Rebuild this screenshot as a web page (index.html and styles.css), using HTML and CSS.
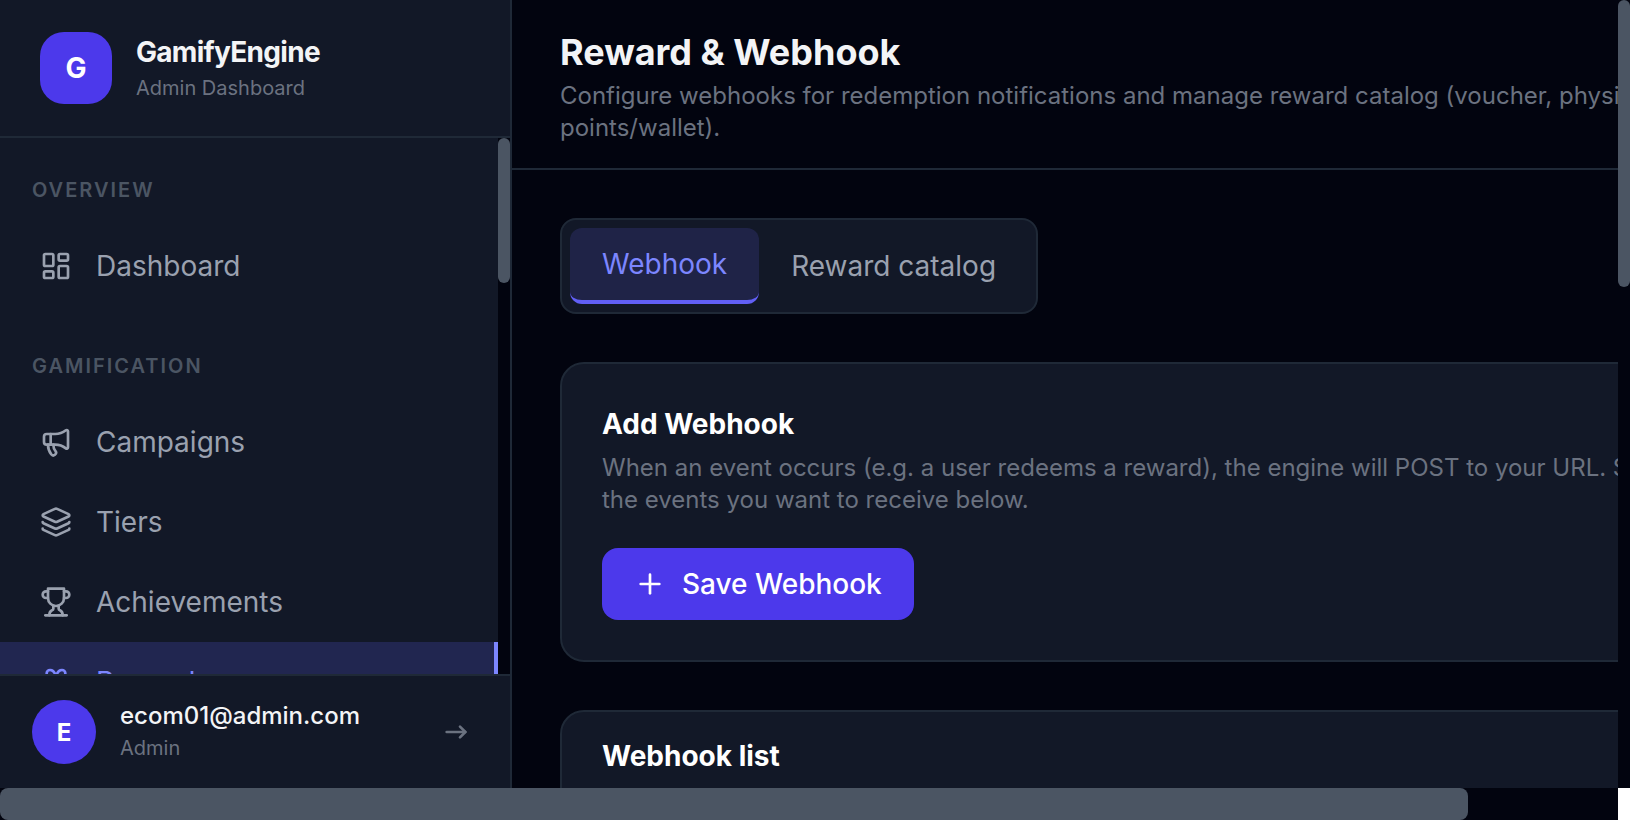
FILE: index.html
```html
<!DOCTYPE html>
<html lang="en">
<head>
<meta charset="utf-8">
<meta name="viewport" content="width=device-width, initial-scale=1">
<title>GamifyEngine - Reward &amp; Webhook</title>
<link rel="stylesheet" href="styles.css">
</head>
<body>
<div class="window">
  <div class="viewport">
    <div class="app">
      <aside class="sidebar">
        <div class="brand">
          <div class="brand-logo">G</div>
          <div class="brand-text">
            <div class="brand-name">GamifyEngine</div>
            <div class="brand-sub">Admin Dashboard</div>
          </div>
        </div>
        <div class="nav-wrap">
          <nav class="nav">
            <section class="nav-section">
              <h2 class="nav-label">OVERVIEW</h2>
              <a class="nav-item" href="#dashboard">
                <svg class="icon" viewBox="0 0 24 24"><rect x="3" y="3" width="7" height="9" rx="1"/><rect x="14" y="3" width="7" height="5" rx="1"/><rect x="14" y="12" width="7" height="9" rx="1"/><rect x="3" y="16" width="7" height="5" rx="1"/></svg>
                Dashboard
              </a>
            </section>
            <section class="nav-section">
              <h2 class="nav-label">GAMIFICATION</h2>
              <a class="nav-item" href="#campaigns">
                <svg class="icon" viewBox="0 0 24 24"><path d="M11 6a13 13 0 0 0 8.4-2.8A1 1 0 0 1 21 4v12a1 1 0 0 1-1.6.8A13 13 0 0 0 11 14H5a2 2 0 0 1-2-2V8a2 2 0 0 1 2-2z"/><path d="M6 14a12 12 0 0 0 2.4 7.2 2 2 0 0 0 3.2-2.4A8 8 0 0 1 10 14"/><path d="M8 6v8"/></svg>
                Campaigns
              </a>
              <a class="nav-item" href="#tiers">
                <svg class="icon" viewBox="0 0 24 24"><path d="M12.83 2.18a2 2 0 0 0-1.66 0L2.6 6.08a1 1 0 0 0 0 1.83l8.58 3.91a2 2 0 0 0 1.66 0l8.58-3.9a1 1 0 0 0 0-1.83z"/><path d="M2 12a1 1 0 0 0 .58.91l8.6 3.91a2 2 0 0 0 1.65 0l8.58-3.9A1 1 0 0 0 22 12"/><path d="M2 17a1 1 0 0 0 .58.91l8.6 3.91a2 2 0 0 0 1.65 0l8.58-3.9A1 1 0 0 0 22 17"/></svg>
                Tiers
              </a>
              <a class="nav-item" href="#achievements">
                <svg class="icon" viewBox="0 0 24 24"><path d="M6 9H4.5a2.5 2.5 0 0 1 0-5H6"/><path d="M18 9h1.500a2.500 2.500 0 0 0 0-5H18"/><path d="M4 22h16"/><path d="M10 14.660V17c0 .55-.47.98-.97 1.210C7.850 18.750 7 20.240 7 22"/><path d="M14 14.660V17c0 .55.47.98.97 1.210C16.150 18.750 17 20.240 17 22"/><path d="M18 2H6v7a6 6 0 0 0 12 0V2Z"/></svg>
                Achievements
              </a>
              <a class="nav-item nav-item-active" href="#rewards">
                <svg class="icon" viewBox="0 0 24 24"><rect x="3" y="8" width="18" height="4" rx="1"/><path d="M12 8v13"/><path d="M19 12v7a2 2 0 0 1-2 2H7a2 2 0 0 1-2-2v-7"/><path d="M7.500 8a2.500 2.500 0 0 1 0-5A4.800 8 0 0 1 12 8a4.800 8 0 0 1 4.500-5 2.500 2.500 0 0 1 0 5"/></svg>
                Rewards
              </a>
            </section>
          </nav>
          <div class="scroll-track"><div class="scroll-thumb scroll-thumb-nav"></div></div>
        </div>
        <div class="user">
          <div class="avatar">E</div>
          <div class="user-text">
            <div class="user-email">ecom01@admin.com</div>
            <div class="user-role">Admin</div>
          </div>
          <button class="logout" type="button" aria-label="Log out">
            <svg class="icon" viewBox="0 0 24 24"><path d="M5 12h14"/><path d="m15 8 4 4-4 4"/></svg>
          </button>
        </div>
      </aside>
      <main class="main">
        <header class="page-header">
          <h1 class="page-title">Reward &amp; Webhook</h1>
          <p class="text-muted">Configure webhooks for redemption notifications and manage reward catalog (voucher, physical, points/wallet).</p>
        </header>
        <div class="content">
          <div class="tabs" role="tablist">
            <button class="tab tab-active" type="button" role="tab" aria-selected="true">Webhook</button>
            <button class="tab" type="button" role="tab" aria-selected="false">Reward catalog</button>
          </div>
          <section class="card">
            <h2 class="card-title">Add Webhook</h2>
            <p class="text-muted card-desc">When an event occurs (e.g. a user redeems a reward), the engine will POST to your URL. Select the events you want to receive below.</p>
            <button class="btn" type="button">
              <svg class="icon" viewBox="0 0 24 24"><path d="M5 12h14"/><path d="M12 5v14"/></svg>
              Save Webhook
            </button>
          </section>
          <section class="card card-list">
            <h2 class="card-title">Webhook list</h2>
          </section>
        </div>
      </main>
    </div>
  </div>
  <div class="scroll-track"><div class="scroll-thumb scroll-thumb-page"></div></div>
  <div class="scroll-track"><div class="scroll-thumb scroll-thumb-bottom"></div></div>
  <div class="scroll-corner"></div>
</div>
</body>
</html>
```

FILE: styles.css
```css
:root {
  --bg: #02040f;
  --panel: #121827;
  --line: #1f2937;
  --thumb: #4b5563;
  --dim: #4b5563;
  --muted: #6b7280;
  --soft: #9aa1af;
  --bright: #f3f4f6;
  --accent: #4c39eb;
  --accent-line: #615ff5;
  --accent-text: #7c86ff;
}

* {
  box-sizing: border-box;
  margin: 0;
  padding: 0;
}

body {
  background: var(--bg);
  color: var(--bright);
  font-family: Inter, "Liberation Sans", sans-serif;
}

button {
  border: 0;
  background: none;
  font: inherit;
  color: inherit;
  cursor: pointer;
}

a {
  color: inherit;
  text-decoration: none;
}

.icon {
  width: 32px;
  height: 32px;
  flex-shrink: 0;
  fill: none;
  stroke: currentColor;
  stroke-width: 2;
  stroke-linecap: round;
  stroke-linejoin: round;
}

/* Window frame with its scrollbars */
.window {
  display: grid;
  grid-template-columns: minmax(0, 1fr) 12px;
  grid-template-rows: minmax(0, 1fr) 32px;
  height: 100vh;
}

.viewport {
  overflow: hidden;
}

.scroll-track {
  background: var(--bg);
}

.scroll-thumb {
  background: var(--thumb);
  border-radius: 8px;
}

.scroll-thumb-nav {
  height: 27%;
}

.scroll-thumb-page {
  height: 36.4%;
}

.scroll-thumb-bottom {
  width: 90.7%;
  height: 100%;
}

.scroll-corner {
  background: #fff;
}

.app {
  display: flex;
  height: 100%;
  min-width: 1784px;
}

/* Sidebar */
.sidebar {
  display: flex;
  flex-direction: column;
  flex-shrink: 0;
  width: 512px;
  background: var(--panel);
  border-right: 2px solid var(--line);
}

.brand {
  display: flex;
  align-items: center;
  gap: 24px;
  padding: 32px 40px;
  border-bottom: 2px solid var(--line);
}

.brand-logo {
  display: grid;
  place-items: center;
  width: 72px;
  height: 72px;
  border-radius: 24px;
  background: var(--accent);
  color: #fff;
  font-size: 28px;
  font-weight: 700;
}

.brand-name {
  font-size: 28px;
  line-height: 40px;
  font-weight: 700;
  letter-spacing: -0.025em;
}

.brand-sub {
  font-size: 20px;
  line-height: 32px;
  color: var(--muted);
}

.nav-wrap {
  display: grid;
  grid-template-columns: minmax(0, 1fr) 12px;
  grid-template-rows: minmax(0, 1fr);
  flex: 1;
  min-height: 0;
}

.nav {
  display: flex;
  flex-direction: column;
  gap: 44px;
  padding-top: 36px;
  overflow: hidden;
}

.nav-label {
  margin-bottom: 20px;
  padding: 0 32px;
  color: var(--dim);
  font-size: 20px;
  line-height: 32px;
  font-weight: 600;
  letter-spacing: 0.1em;
}

.nav-item {
  display: flex;
  align-items: center;
  gap: 24px;
  height: 80px;
  padding: 0 40px;
  color: var(--soft);
  font-size: 28px;
  line-height: 40px;
}

.nav-item-active {
  background: rgba(97, 95, 245, 0.2);
  border-right: 4px solid var(--accent-text);
  color: var(--accent-text);
}

.user {
  display: flex;
  align-items: center;
  gap: 24px;
  padding: 24px 32px;
  border-top: 2px solid var(--line);
}

.avatar {
  display: grid;
  place-items: center;
  width: 64px;
  height: 64px;
  border-radius: 50%;
  background: var(--accent);
  color: #fff;
  font-size: 24px;
  font-weight: 700;
}

.user-text {
  flex: 1;
}

.user-email {
  font-size: 24px;
  line-height: 32px;
  font-weight: 500;
}

.user-role {
  font-size: 20px;
  line-height: 32px;
  color: var(--muted);
}

.logout {
  display: flex;
  padding: 6px;
  color: var(--muted);
}

/* Main column */
.main {
  flex: 1;
  min-width: 0;
}

.page-header {
  padding: 24px 48px;
  border-bottom: 2px solid var(--line);
}

.page-title {
  font-size: 36px;
  line-height: 56px;
  font-weight: 700;
}

.text-muted {
  color: var(--muted);
  font-size: 24px;
  line-height: 32px;
}

.content {
  display: flex;
  flex-direction: column;
  align-items: stretch;
  gap: 48px;
  padding: 48px;
}

.tabs {
  display: flex;
  align-self: flex-start;
  padding: 8px;
  border: 2px solid var(--line);
  border-radius: 16px;
  background: var(--panel);
}

.tab {
  padding: 16px 32px;
  border-radius: 12px;
  color: var(--soft);
  font-size: 28px;
  line-height: 40px;
}

.tab-active {
  border-bottom: 4px solid var(--accent-line);
  background: rgba(97, 95, 245, 0.16);
  color: var(--accent-text);
}

.card {
  padding: 40px;
  border: 2px solid var(--line);
  border-radius: 24px;
  background: var(--panel);
}

.card-list {
  padding-top: 24px;
}

.card-title {
  color: #fff;
  font-size: 28px;
  line-height: 40px;
  font-weight: 700;
}

.card-desc {
  margin: 8px 0 32px;
}

.btn {
  display: flex;
  align-items: center;
  gap: 16px;
  padding: 16px 32px;
  border-radius: 16px;
  background: var(--accent);
  color: #fff;
  font-size: 28px;
  line-height: 40px;
  font-weight: 500;
}
```
